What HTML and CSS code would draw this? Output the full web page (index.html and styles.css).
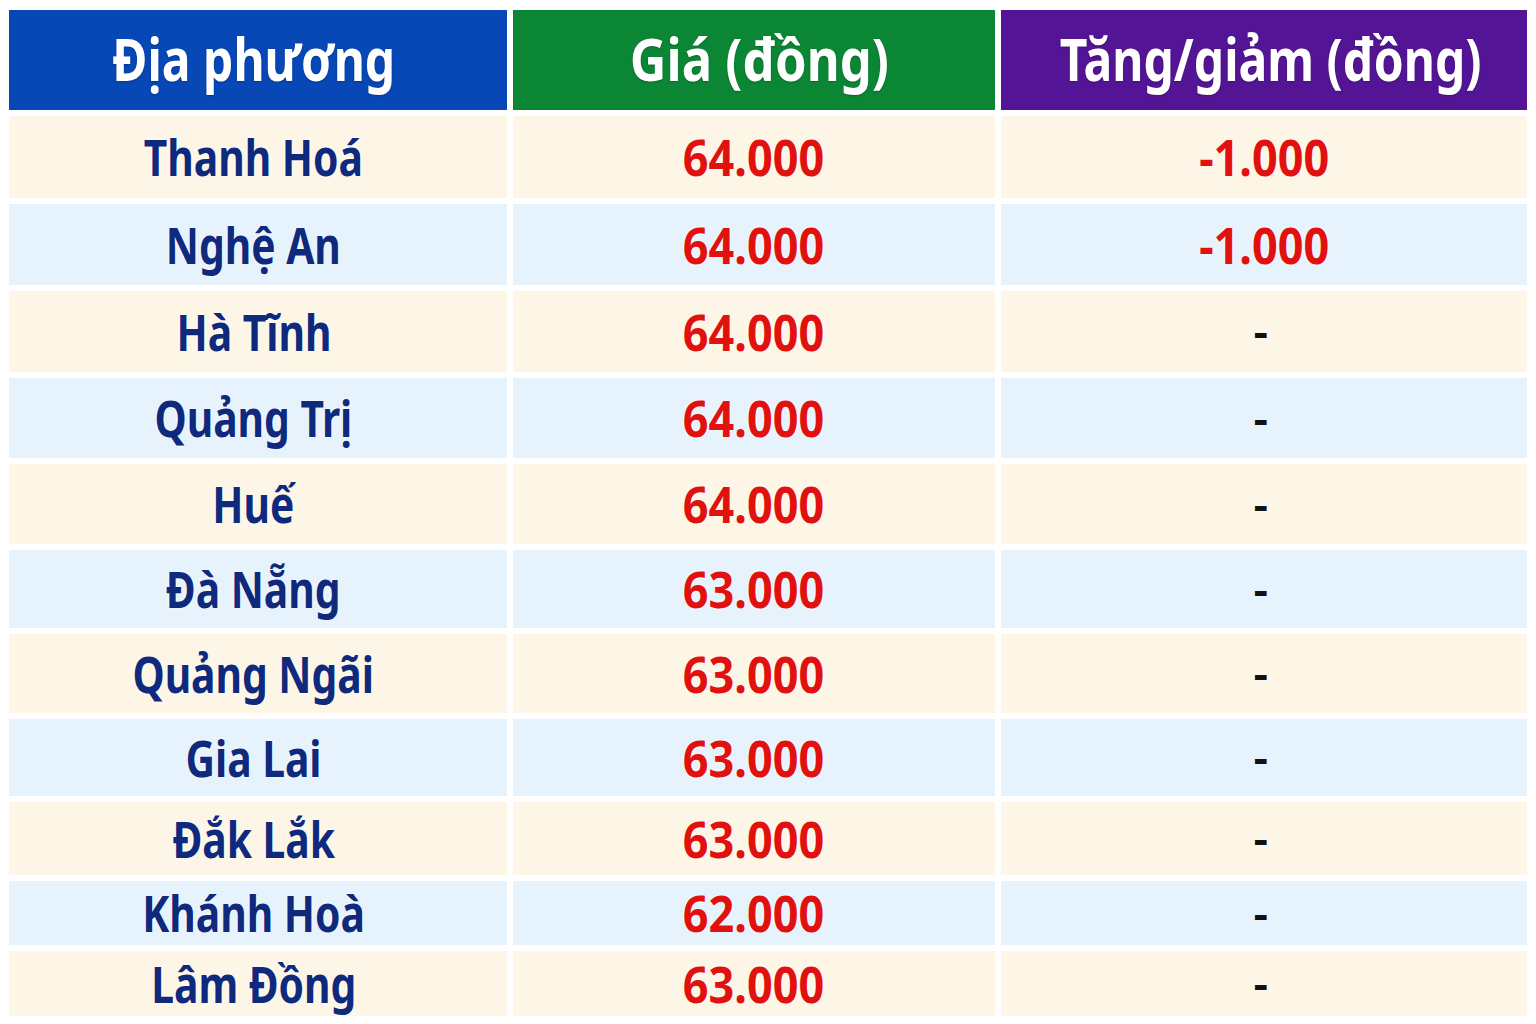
FILE: index.html
```html
<!DOCTYPE html>
<html lang="vi">
<head>
<meta charset="utf-8">
<title>Giá heo hơi</title>
<link rel="stylesheet" href="styles.css">
</head>
<body>
<div class="table">
  <div class="cell c1 head head-blue"><span class="t">Địa phương</span></div>
  <div class="cell c2 head head-green"><span class="t">Giá (đồng)</span></div>
  <div class="cell c3 head head-purple"><span class="t">Tăng/giảm (đồng)</span></div>

  <div class="cell c1 cream"><span class="t name">Thanh Hoá</span></div>
  <div class="cell c2 cream"><span class="t num">64.000</span></div>
  <div class="cell c3 cream"><span class="t num">-1.000</span></div>

  <div class="cell c1 blue"><span class="t name">Nghệ An</span></div>
  <div class="cell c2 blue"><span class="t num">64.000</span></div>
  <div class="cell c3 blue"><span class="t num">-1.000</span></div>

  <div class="cell c1 cream"><span class="t name">Hà Tĩnh</span></div>
  <div class="cell c2 cream"><span class="t num">64.000</span></div>
  <div class="cell c3 cream"><span class="t dash">-</span></div>

  <div class="cell c1 blue"><span class="t name">Quảng Trị</span></div>
  <div class="cell c2 blue"><span class="t num">64.000</span></div>
  <div class="cell c3 blue"><span class="t dash">-</span></div>

  <div class="cell c1 cream"><span class="t name">Huế</span></div>
  <div class="cell c2 cream"><span class="t num">64.000</span></div>
  <div class="cell c3 cream"><span class="t dash">-</span></div>

  <div class="cell c1 blue"><span class="t name">Đà Nẵng</span></div>
  <div class="cell c2 blue"><span class="t num">63.000</span></div>
  <div class="cell c3 blue"><span class="t dash">-</span></div>

  <div class="cell c1 cream"><span class="t name">Quảng Ngãi</span></div>
  <div class="cell c2 cream"><span class="t num">63.000</span></div>
  <div class="cell c3 cream"><span class="t dash">-</span></div>

  <div class="cell c1 blue"><span class="t name">Gia Lai</span></div>
  <div class="cell c2 blue"><span class="t num">63.000</span></div>
  <div class="cell c3 blue"><span class="t dash">-</span></div>

  <div class="cell c1 cream"><span class="t name">Đắk Lắk</span></div>
  <div class="cell c2 cream"><span class="t num">63.000</span></div>
  <div class="cell c3 cream"><span class="t dash">-</span></div>

  <div class="cell c1 blue"><span class="t name">Khánh Hoà</span></div>
  <div class="cell c2 blue"><span class="t num">62.000</span></div>
  <div class="cell c3 blue"><span class="t dash">-</span></div>

  <div class="cell c1 cream"><span class="t name">Lâm Đồng</span></div>
  <div class="cell c2 cream"><span class="t num">63.000</span></div>
  <div class="cell c3 cream"><span class="t dash">-</span></div>
</div>
</body>
</html>
```

FILE: styles.css
```css
html, body {
  margin: 0;
  padding: 0;
  background: #ffffff;
}

body {
  font-family: "Noto Sans", "Open Sans", "DejaVu Sans", sans-serif;
  font-weight: 700;
}

.table {
  display: grid;
  grid-template-columns: 498px 482px 526px;
  grid-template-rows: 100px 82px 81px 81px 80px 80px 78px 79px 77px 73px 64px 65px;
  column-gap: 6px;
  row-gap: 6px;
  margin: 10px 0 0 9px;
}

.cell {
  display: flex;
  align-items: center;
  justify-content: center;
  box-sizing: border-box;
}

.c1 { padding-right: 9px; }

.t {
  display: inline-block;
  white-space: nowrap;
  line-height: 1.2;
}

.head {
  color: #ffffff;
  font-size: 60px;
}

.head .t {
  transform: scaleX(0.8);
  margin-top: -4px;
  text-shadow: 0 1px 2px rgba(0, 0, 0, 0.25);
}

.head.c2 { padding-left: 10px; }
.head.c2 .t { transform: scaleX(0.845); }
.head.c3 { padding-left: 14px; }

.head-blue { background: #0747b6; }
.head-green { background: #0b8635; }
.head-purple { background: #531595; }

.cream { background: #fdf6e6; }
.blue { background: #e6f2fc; }

.name {
  color: #0f2a7d;
  font-size: 50px;
  transform: scaleX(0.815);
  text-shadow: 0 0 3px #ffffff;
}

.num {
  color: #e0110f;
  font-size: 50px;
  transform: scaleX(0.9);
  text-shadow: 0 0 3px #ffffff;
}

.dash {
  color: #111111;
  font-size: 42px;
  transform: scaleX(1.05);
  margin-top: 0;
  margin-right: 7px;
}
```
